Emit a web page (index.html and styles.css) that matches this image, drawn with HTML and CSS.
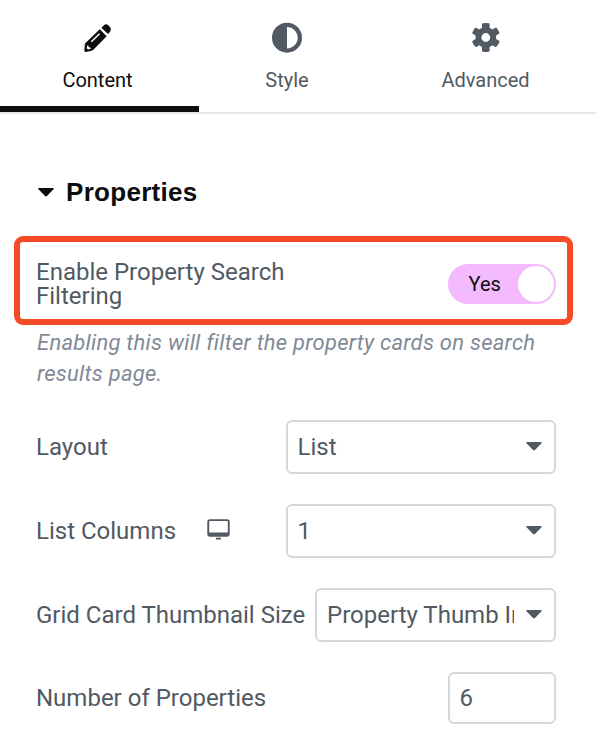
FILE: index.html
```html
<!DOCTYPE html>
<html lang="en">
<head>
<meta charset="utf-8">
<title>Properties</title>
<link rel="stylesheet" href="styles.css">
</head>
<body>
<main class="panel">
  <nav class="tabs">
    <a class="tab tab-content active">
      <svg class="tab-icon" viewBox="0 0 32 32"><path d="M19.4 5.8 21.8 3.4Q24 1.4 26.2 3.2L28.2 5.2Q30 7.4 28.2 9.6L26 11.9Z"/><path fill-rule="evenodd" d="M17.8 7.3 24.7 14.2 11.6 27.6Q10.6 28.5 9.6 28.8L4 29.9Q2.2 30.1 2.3 28.2L2.8 22.8Q3 21.4 4 20.6ZM17 11.2 8.8 19.2 9.8 20.2 18 12.2ZM5.2 23.5 4.7 26.2 6.2 27.5 8.8 26.8 8.4 25.4 6.7 25.2 6.4 23.5Z"/></svg>
      <span>Content</span>
    </a>
    <a class="tab tab-style">
      <svg class="tab-icon" viewBox="0 0 32 32"><path fill-rule="evenodd" d="M16 .7A15 15 0 1 1 16 30.7A15 15 0 1 1 16 .7ZM16 5V26.4A10.7 10.7 0 0 0 16 5Z"/></svg>
      <span>Style</span>
    </a>
    <a class="tab tab-advanced">
      <svg class="tab-icon" viewBox="0 0 32 32"><path fill-rule="evenodd" d="M12 2.4Q12 1.4 12.9 1.3 16 .8 18.7 1.3 19.6 1.4 19.6 2.4V5.7L22.5 7.4 25.4 5.7Q26 5.4 26.6 6 28.6 8.2 29.4 10.7 29.6 11.4 29 11.8L26.1 13.5V17.1L29 18.8Q29.6 19.2 29.4 19.9 28.6 22.4 26.6 24.6 26 25.2 25.4 24.9L22.5 23.2 19.6 25V28.8Q19.6 29.5 18.7 29.7 16 30.1 12.9 29.7 12 29.5 12 28.8V25L9.2 23.2 6.3 24.9Q5.7 25.2 5.1 24.6 3.1 22.4 2.3 19.9 2.1 19.2 2.7 18.8L5.6 17.1V13.5L2.7 11.8Q2.1 11.4 2.3 10.7 3.1 8.2 5.1 6 5.7 5.4 6.3 5.7L9.2 7.4 12 5.7ZM15.8 11.1A4.4 4.4 0 1 0 15.8 19.9A4.4 4.4 0 1 0 15.8 11.1Z"/></svg>
      <span>Advanced</span>
    </a>
  </nav>

  <h2 class="section-title">
    <svg class="caret" viewBox="0 0 16 9"><path d="M1 0H15Q16.3.3 15.5 1.3L9 8.1Q8 9 7 8.1L.5 1.3Q-.3.3 1 0Z"/></svg>
    <span>Properties</span>
  </h2>

  <section class="highlight">
    <span class="label switch-label">Enable Property Search Filtering</span>
    <span class="switch"><span class="switch-text">Yes</span><span class="knob"></span></span>
  </section>
  <p class="description">Enabling this will filter the property cards on search results page.</p>

  <div class="controls">
    <div class="row">
      <span class="label">Layout</span>
      <div class="field select"><span class="value">List</span><svg class="caret" viewBox="0 0 16 9"><path d="M1 0H15Q16.3.3 15.5 1.3L9 8.1Q8 9 7 8.1L.5 1.3Q-.3.3 1 0Z"/></svg></div>
    </div>
    <div class="row">
      <span class="label">List Columns</span>
      <svg class="device" viewBox="0 0 24 22"><path fill-rule="evenodd" d="M3 .2H20Q22.7.2 22.7 3V15Q22.7 17.7 20 17.7H3Q.3 17.7 .3 15V3Q.3.2 3 .2ZM3 2.1Q2.2 2.1 2.2 3V13.5H20.8V3Q20.8 2.1 20 2.1Z"/><path d="M9 18.7H14V20.5H9Z"/></svg>
      <div class="field select"><span class="value">1</span><svg class="caret" viewBox="0 0 16 9"><path d="M1 0H15Q16.3.3 15.5 1.3L9 8.1Q8 9 7 8.1L.5 1.3Q-.3.3 1 0Z"/></svg></div>
    </div>
    <div class="row">
      <span class="label">Grid Card Thumbnail Size</span>
      <div class="field select select-narrow"><span class="value">Property Thumb Image</span><svg class="caret" viewBox="0 0 16 9"><path d="M1 0H15Q16.3.3 15.5 1.3L9 8.1Q8 9 7 8.1L.5 1.3Q-.3.3 1 0Z"/></svg></div>
    </div>
    <div class="row row-number">
      <span class="label">Number of Properties</span>
      <div class="field number"><span class="value">6</span></div>
    </div>
  </div>
</main>
</body>
</html>
```

FILE: styles.css
```css
* { box-sizing: border-box; }
body {
  margin: 0;
  background: #fff;
  color: #515962;
  font-family: Roboto, "Liberation Sans", sans-serif;
}
.panel { width: 596px; height: 750px; overflow: hidden; }
svg { display: block; fill: currentColor; flex: none; }

.tabs {
  display: grid;
  grid-template-columns: 199px 176px 221px;
  height: 114px;
  border-bottom: 2px solid #e6e9ec;
}
.tab {
  display: flex;
  flex-direction: column;
  align-items: center;
  gap: 14px;
  padding-top: 22px;
  font-size: 20px;
  line-height: 24px;
}
.tab-content { padding-right: 4px; }
.active { color: #0c0d0e; border-bottom: 6px solid #0c0d0e; }
.tab-icon { width: 32px; height: 32px; }

.section-title {
  display: flex;
  align-items: center;
  gap: 12px;
  margin: 62px 0 0 38px;
  height: 32px;
  color: #0c0d0e;
  font: bold 26px/32px "Liberation Sans", sans-serif;
  letter-spacing: 0.3px;
}
.caret { width: 16px; height: 9px; }

.highlight {
  display: flex;
  justify-content: space-between;
  align-items: center;
  width: 559px;
  height: 89px;
  margin: 28px 0 0 14px;
  padding: 7px 11px 0 16px;
  border: 6px solid #f64a27;
  border-radius: 9px;
}
.label { font-size: 24px; line-height: 24px; white-space: nowrap; }
.switch-label { width: 260px; white-space: normal; }
.switch {
  display: flex;
  align-items: center;
  justify-content: space-between;
  width: 108px;
  height: 40px;
  padding: 2px 2px 2px 20.5px;
  border-radius: 20px;
  background: #f3bafd;
  color: #0c0d0e;
  font-size: 20px;
}
.knob { width: 36px; height: 36px; border-radius: 50%; background: #fff; }

.description {
  width: 520px;
  margin: 2px 0 0 37px;
  color: #818a96;
  font-size: 22px;
  font-style: italic;
  line-height: 31px;
  letter-spacing: 0.25px;
}

.controls {
  display: flex;
  flex-direction: column;
  gap: 30px;
  padding: 31px 40px 0 36px;
}
.row { display: flex; align-items: center; height: 54px; }
.row-number { height: 52px; }
.field {
  display: flex;
  align-items: center;
  height: 100%;
  margin-left: auto;
  border: 2px solid #d5d8dc;
  border-radius: 6px;
  font-size: 24px;
}
.value { line-height: 28px; }
.select { width: 270px; padding: 0 12px 0 9.5px; }
.select .value { flex: 1; overflow: hidden; white-space: nowrap; margin-right: 12px; }
.select-narrow { width: 241px; padding-left: 10px; }
.select .caret { margin-bottom: 1px; }
.number { width: 108px; padding-left: 9.5px; }
.device { width: 24px; height: 22px; margin: 0 0 2px 31px; }
```
